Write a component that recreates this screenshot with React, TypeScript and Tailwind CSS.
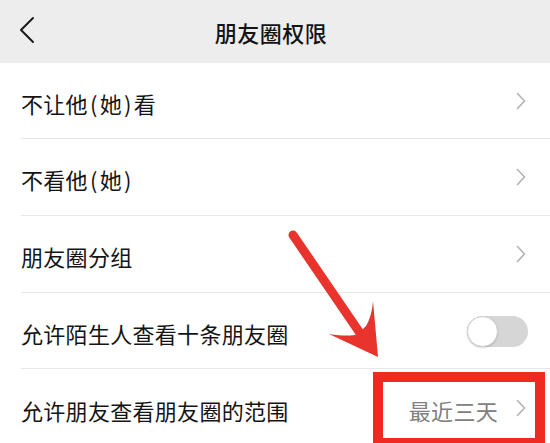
import React from "react";

function Chevron() {
  return (
    <svg width="10" height="18" viewBox="0 0 10 18" className="shrink-0">
      <path d="M1.5 1.5 L8.5 9 L1.5 16.5" fill="none" stroke="#b2b2b2" strokeWidth="1.6" strokeLinecap="round" strokeLinejoin="round" />
    </svg>
  );
}

function Row({ label, right, last }: { label: React.ReactNode; right: React.ReactNode; last?: boolean }) {
  return (
    <div className="pl-[21px]">
      <div className={`flex items-center justify-between h-[77px] pr-[24px] ${last ? "" : "border-b border-[#e8e8e8]"}`}>
        <span className="text-[22px] leading-none pt-[4px] text-[#141414] tracking-[0.3px]">{label}</span>
        {right}
      </div>
    </div>
  );
}

function P({ c }: { c: string }) {
  return <span className="mx-[2px]">{c}</span>;
}

export default function App() {
  return (
    <div className="relative w-[550px] h-[443px] overflow-hidden bg-white font-['Noto_Sans_CJK_SC',sans-serif]">
      <div className="h-[63px] bg-[#ededed] flex items-center relative">
        <svg width="16" height="28" viewBox="0 0 16 28" className="absolute left-[19px] top-[16px]">
          <path d="M14 2 L2 14 L14 26" fill="none" stroke="#1a1a1a" strokeWidth="2" strokeLinecap="round" strokeLinejoin="round" />
        </svg>
        <div className="flex-1 flex justify-center pr-[8px]">
          <span className="text-[22px] leading-none font-medium text-[#141414] tracking-[0.5px] pt-[1px]">朋友圈权限</span>
        </div>
      </div>
      <div className="flex flex-col">
        <div className="pl-[21px]">
          <div className="flex items-center justify-between h-[76px] pr-[24px] border-b border-[#e8e8e8]">
            <span className="text-[22px] leading-none pt-[4px] text-[#141414] tracking-[0.3px]">
              不让他<P c="(" />她<P c=")" />看
            </span>
            <Chevron />
          </div>
        </div>
        <Row label={<>不看他<P c="(" />她<P c=")" /></>} right={<Chevron />} />
        <Row label="朋友圈分组" right={<Chevron />} />
        <div className="pl-[21px]">
          <div className="flex items-center justify-between h-[76px] pr-[22px] border-b border-[#e8e8e8]">
            <span className="text-[22px] leading-none pt-[4px] text-[#141414] tracking-[0.3px]">允许陌生人查看十条朋友圈</span>
            <div className="relative w-[61px] h-[31px] rounded-full bg-[#d6d6d6] mt-[2px]">
              <div className="absolute left-0 top-0 w-[31px] h-[31px] rounded-full bg-white border border-[#d0d0d0] shadow-[0_1px_2px_rgba(0,0,0,0.15)]" />
            </div>
          </div>
        </div>
        <Row
          label="允许朋友查看朋友圈的范围"
          last
          right={
            <div className="flex items-center gap-[18px]">
              <span className="text-[22px] leading-none pt-[4px] text-[#808080] tracking-[0.3px]">最近三天</span>
              <Chevron />
            </div>
          }
        />
      </div>

      {/* annotation box */}
      <div className="absolute left-[373px] top-[372px] w-[172px] h-[76px] border-[10px] border-[#ee2a23]" />

      {/* annotation arrow */}
      <svg className="absolute left-0 top-0 pointer-events-none" width="550" height="443" viewBox="0 0 550 443">
        <line x1="293" y1="235" x2="362" y2="336" stroke="#e8342c" strokeWidth="9" strokeLinecap="round" />
        <path d="M378 357 L329 334 Q350 337 358 334 L366 326 Q372 316 373 301 Z" fill="#e8342c" />
      </svg>
    </div>
  );
}
